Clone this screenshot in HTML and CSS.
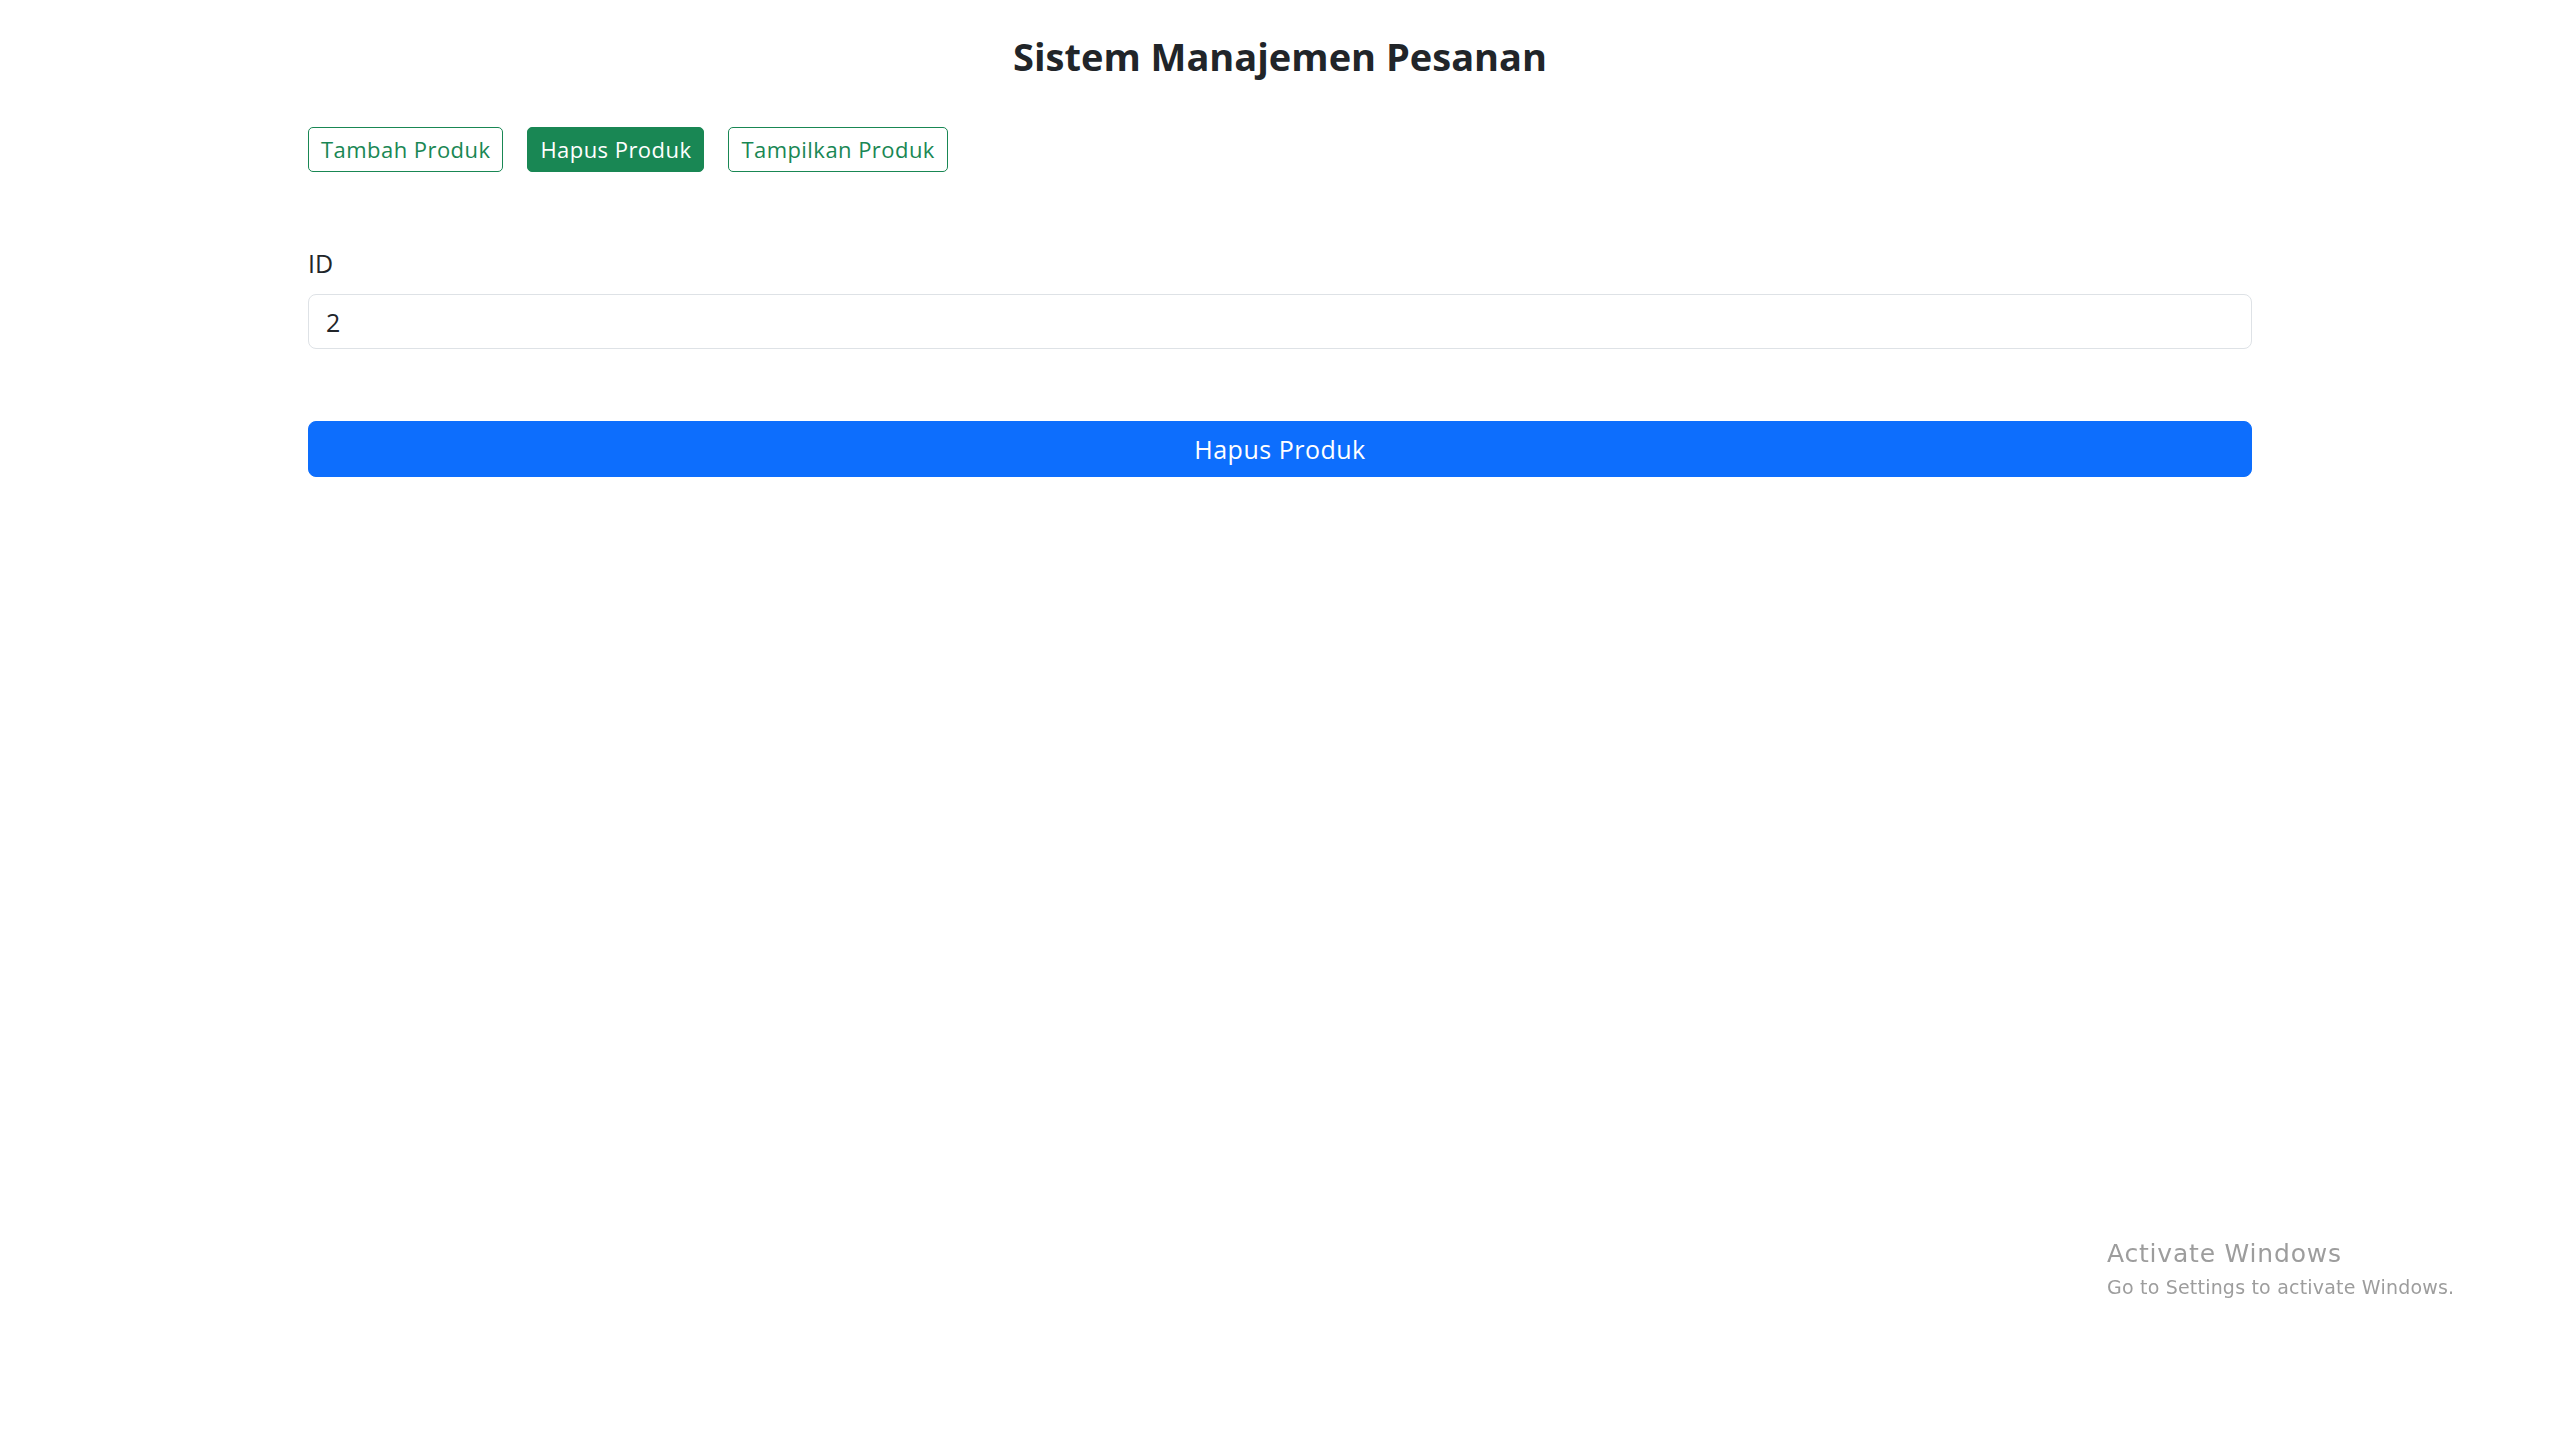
FILE: index.html
```html
<!DOCTYPE html>
<html lang="id">
<head>
<meta charset="utf-8">
<title>Sistem Manajemen Pesanan</title>
<link rel="stylesheet" href="styles.css">
</head>
<body>
<main class="container">
  <h1 class="title">Sistem Manajemen Pesanan</h1>
  <nav class="tabs">
    <button class="tab">Tambah Produk</button>
    <button class="tab active">Hapus Produk</button>
    <button class="tab">Tampilkan Produk</button>
  </nav>
  <form class="form">
    <label class="label" for="id">ID</label>
    <input class="input" id="id" type="text" value="2">
    <button class="submit" type="button">Hapus Produk</button>
  </form>
</main>
<div class="watermark">
  <div class="wm-title">Activate Windows</div>
  <div class="wm-sub">Go to Settings to activate Windows.</div>
</div>
</body>
</html>
```
FILE: styles.css
```css
html, body {
  margin: 0;
  padding: 0;
  background: #ffffff;
}
body {
  font-family: "Open Sans", "Noto Sans", sans-serif;
  color: #212529;
}
.container {
  width: 1944px;
  margin: 0 auto;
}
.title {
  margin: 0;
  padding-top: 33px;
  font-size: 38px;
  line-height: 46px;
  font-weight: 700;
  text-align: center;
  color: #212529;
}
.tabs {
  display: flex;
  gap: 24px;
  margin-top: 48px;
}
.tab {
  font-family: inherit;
  font-size: 22px;
  line-height: 33px;
  letter-spacing: 0.45px;
  padding: 5px 12px;
  border: 1px solid #198754;
  border-radius: 5px;
  background: #ffffff;
  color: #198754;
  cursor: pointer;
}
.tab.active {
  background: #198754;
  color: #ffffff;
}
.form {
  display: flex;
  flex-direction: column;
  margin-top: 73px;
}
.label {
  font-size: 25px;
  line-height: 37px;
}
.input {
  margin-top: 12px;
  height: 55px;
  box-sizing: border-box;
  padding: 0 17px;
  border: 1px solid #dee2e6;
  border-radius: 8px;
  font-family: inherit;
  font-size: 25px;
  color: #212529;
  outline: none;
}
.submit {
  margin-top: 72px;
  height: 56px;
  border: 1px solid #0d6efd;
  border-radius: 8px;
  background: #0d6efd;
  color: #ffffff;
  font-family: inherit;
  font-size: 25px;
  letter-spacing: 0.5px;
  cursor: pointer;
}
.watermark {
  position: fixed;
  left: 2107px;
  top: 1238px;
  color: #9d9d9d;
  font-family: "DejaVu Sans", sans-serif;
}
.wm-title {
  font-size: 25px;
  line-height: 32px;
  letter-spacing: 0.8px;
}
.wm-sub {
  font-size: 19px;
  line-height: 34px;
  letter-spacing: 0.2px;
}
```
